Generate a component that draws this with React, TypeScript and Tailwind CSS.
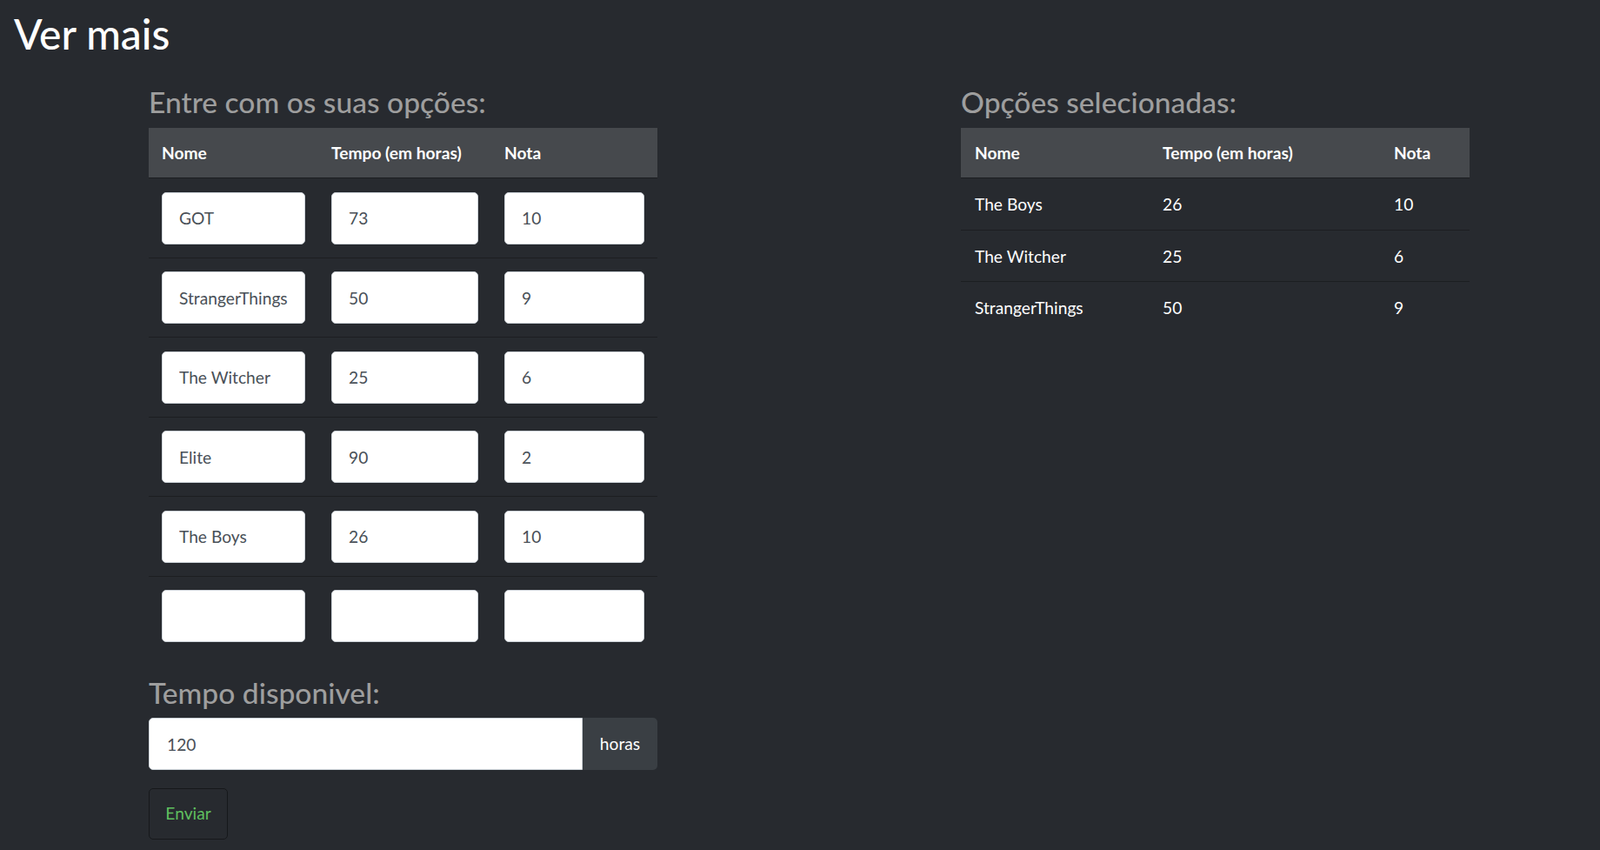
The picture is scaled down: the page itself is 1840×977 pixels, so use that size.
import React from "react";

const rows = [
  ["GOT", "73", "10"],
  ["StrangerThings", "50", "9"],
  ["The Witcher", "25", "6"],
  ["Elite", "90", "2"],
  ["The Boys", "26", "10"],
  ["", "", ""],
];

const selected = [
  ["The Boys", "26", "10"],
  ["The Witcher", "25", "6"],
  ["StrangerThings", "50", "9"],
];

const inputWidths = ["w-[165px]", "w-[169px]", "w-[161px]"];

function Field({ value, width }: { value: string; width: string }) {
  return (
    <input
      defaultValue={value}
      className={`${width} h-[60px] rounded-[5px] border border-[#ced4da] bg-white pl-[19px] text-[19.2px] text-[#495057] outline-none`}
    />
  );
}

export default function App() {
  return (
    <div className="min-h-screen bg-[#272a2f] font-['Lato',sans-serif] text-[19.2px]">
      <h1 className="pt-[10px] pl-4 text-[48px] font-medium leading-[58px] text-white">
        Ver mais
      </h1>

      <div className="mt-[29px] flex pl-[171px] gap-[349px]">
        {/* left column: form */}
        <div className="w-[585px]">
          <h3 className="mb-[10px] text-[33.6px] font-medium leading-[40px] text-[#9e9e9e]">
            Entre com os suas opções:
          </h3>
          <div>
            <div className="grid grid-cols-[195px_199px_191px] h-[58px] items-center border-b border-[#1c1e21] bg-[#46494d] pt-[2px] font-bold text-white">
              <div className="px-[15px]">Nome</div>
              <div className="px-[15px]">Tempo (em horas)</div>
              <div className="px-[15px]">Nota</div>
            </div>
            {rows.map((r, i) => (
              <div
                key={i}
                className={`grid grid-cols-[195px_199px_191px] pt-[15.5px] pb-[15px] ${
                  i > 0 ? "border-t border-[#1c1e21]" : ""
                }`}
              >
                {r.map((v, j) => (
                  <div key={j} className="px-[15px]">
                    <Field value={v} width={inputWidths[j]} />
                  </div>
                ))}
              </div>
            ))}
          </div>

          <h3 className="mt-[23px] mb-[9px] text-[33.6px] font-medium leading-[40px] text-[#9e9e9e]">
            Tempo disponivel:
          </h3>
          <div className="flex h-[60px]">
            <input
              defaultValue="120"
              className="h-full flex-1 rounded-l-[5px] border border-[#ced4da] bg-white pl-[20px] text-[19.2px] text-[#495057] outline-none"
            />
            <div className="flex w-[86px] items-center justify-center rounded-r-[5px] bg-[#3a3f44] text-white">
              horas
            </div>
          </div>
          <button className="mt-[21px] h-[59px] w-[91px] rounded-[5px] border border-[#16181b] text-[#5fbf5f]">
            Enviar
          </button>
        </div>

        {/* right column: results */}
        <div className="w-[585px]">
          <h3 className="mb-[10px] text-[33.6px] font-medium leading-[40px] text-[#9e9e9e]">
            Opções selecionadas:
          </h3>
          <div className="grid grid-cols-[216px_266px_103px] h-[58px] items-center border-b border-[#1c1e21] bg-[#46494d] pt-[2px] font-bold text-white">
            <div className="px-[16px]">Nome</div>
            <div className="px-[16px]">Tempo (em horas)</div>
            <div className="px-[16px]">Nota</div>
          </div>
          {selected.map((r, i) => (
            <div
              key={i}
              className={`grid grid-cols-[216px_266px_103px] h-[59px] items-center pt-[2px] text-white ${
                i > 0 ? "border-t border-[#1c1e21]" : ""
              }`}
            >
              {r.map((v, j) => (
                <div key={j} className="px-[16px]">
                  {v}
                </div>
              ))}
            </div>
          ))}
        </div>
      </div>
    </div>
  );
}
